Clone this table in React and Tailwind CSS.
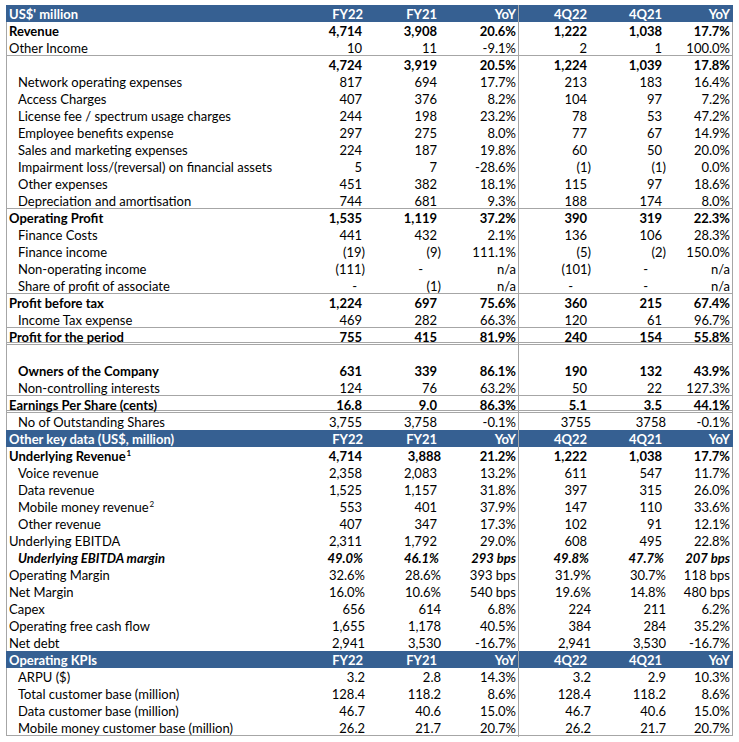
import React from 'react'

// Row border styles
const LINE = 'border-b border-b-[#a6a6a6]'
const DOUBLE = 'border-b-[3px] border-double border-b-[#a6a6a6]'

const GRID = 'grid grid-cols-[283px_77px_76px_76px_74px_75px_64px] h-[17px]'

const PAD = {
  2: 'pr-[2px]',
  4: 'pr-[4px]',
  5: 'pr-[5px]',
  6: 'pr-[6px]',
  10: 'pr-[10px]',
  20: 'pr-[20px]',
}

// v ending with "!" = no trailing accounting space, "~" = margin style
function padFor(col, v) {
  if (v.endsWith('!')) return 2
  if (v.endsWith('~')) return 4
  if (v.endsWith('%') || v.endsWith('bps') || v === 'n/a') return 2
  if (v.startsWith('(')) return 2
  if (v === '-') return col === 0 ? 10 : 20
  return col === 0 ? 5 : 6
}

const rows = [
  { head: "US$' million" },
  { label: 'Revenue', bold: true, v: ['4,714', '3,908', '20.6%', '1,222', '1,038', '17.7%'] },
  { label: 'Other Income', v: ['10', '11', '-9.1%', '2', '1', '100.0%'], line: LINE },
  { label: '', bold: true, v: ['4,724', '3,919', '20.5%', '1,224', '1,039', '17.8%'] },
  { label: 'Network operating expenses', indent: true, v: ['817', '694', '17.7%', '213', '183', '16.4%'] },
  { label: 'Access Charges', indent: true, v: ['407', '376', '8.2%', '104', '97', '7.2%'] },
  { label: 'License fee / spectrum usage charges', indent: true, v: ['244', '198', '23.2%', '78', '53', '47.2%'] },
  { label: 'Employee benefits expense', indent: true, v: ['297', '275', '8.0%', '77', '67', '14.9%'] },
  { label: 'Sales and marketing expenses', indent: true, v: ['224', '187', '19.8%', '60', '50', '20.0%'] },
  { label: 'Impairment loss/(reversal) on financial assets', indent: true, v: ['5', '7', '-28.6%', '(1)', '(1)', '0.0%'] },
  { label: 'Other expenses', indent: true, v: ['451', '382', '18.1%', '115', '97', '18.6%'] },
  { label: 'Depreciation and amortisation', indent: true, v: ['744', '681', '9.3%', '188', '174', '8.0%'], line: LINE },
  { label: 'Operating Profit', bold: true, v: ['1,535', '1,119', '37.2%', '390', '319', '22.3%'] },
  { label: 'Finance Costs', indent: true, v: ['441', '432', '2.1%', '136', '106', '28.3%'] },
  { label: 'Finance income', indent: true, v: ['(19)', '(9)', '111.1%', '(5)', '(2)', '150.0%'] },
  { label: 'Non-operating income', indent: true, v: ['(111)', '-', 'n/a', '(101)', '-', 'n/a'] },
  { label: 'Share of profit of associate', indent: true, v: ['-', '(1)', 'n/a', '-', '-', 'n/a'], line: LINE },
  { label: 'Profit before tax', bold: true, v: ['1,224', '697', '75.6%', '360', '215', '67.4%'] },
  { label: 'Income Tax expense', indent: true, v: ['469', '282', '66.3%', '120', '61', '96.7%'], line: LINE },
  { label: 'Profit for the period', bold: true, v: ['755', '415', '81.9%', '240', '154', '55.8%'], line: DOUBLE },
  { label: '', v: ['', '', '', '', '', ''] },
  { label: 'Owners of the Company', bold: true, indent: true, v: ['631', '339', '86.1%', '190', '132', '43.9%'] },
  { label: 'Non-controlling interests', indent: true, v: ['124', '76', '63.2%', '50', '22', '127.3%'], line: LINE },
  { label: 'Earnings Per Share (cents)', bold: true, v: ['16.8', '9.0', '86.3%', '5.1', '3.5', '44.1%'], line: DOUBLE },
  { label: 'No of Outstanding Shares', indent: true, v: ['3,755', '3,758', '-0.1%', '3755!', '3758!', '-0.1%'] },
  { head: 'Other key data (US$, million)' },
  { label: 'Underlying Revenue', sup: '1', bold: true, v: ['4,714', '3,888!', '21.2%', '1,222', '1,038', '17.7%'] },
  { label: 'Voice revenue', indent: true, v: ['2,358', '2,083', '13.2%', '611', '547', '11.7%'] },
  { label: 'Data revenue', indent: true, v: ['1,525', '1,157', '31.8%', '397', '315', '26.0%'] },
  { label: 'Mobile money revenue', sup: '2', indent: true, v: ['553', '401', '37.9%', '147', '110', '33.6%'] },
  { label: 'Other revenue', indent: true, v: ['407', '347', '17.3%', '102', '91', '12.1%'] },
  { label: 'Underlying EBITDA', v: ['2,311', '1,792', '29.0%', '608', '495', '22.8%'] },
  { label: 'Underlying EBITDA margin', bold: true, italic: true, indent: true, v: ['49.0%~', '46.1%~', '293 bps', '49.8%~', '47.7%~', '207 bps'] },
  { label: 'Operating Margin', v: ['32.6%', '28.6%', '393 bps', '31.9%', '30.7%', '118 bps'] },
  { label: 'Net Margin', v: ['16.0%', '10.6%', '540 bps', '19.6%', '14.8%', '480 bps'] },
  { label: 'Capex', v: ['656!', '614!', '6.8%', '224!', '211!', '6.2%'] },
  { label: 'Operating free cash flow', v: ['1,655!', '1,178!', '40.5%', '384!', '284!', '35.2%'] },
  { label: 'Net debt', v: ['2,941!', '3,530!', '-16.7%', '2,941!', '3,530!', '-16.7%'] },
  { head: 'Operating KPIs' },
  { label: 'ARPU ($)', indent: true, v: ['3.2!', '2.8!', '14.3%', '3.2!', '2.9!', '10.3%'] },
  { label: 'Total customer base (million)', indent: true, v: ['128.4!', '118.2!', '8.6%', '128.4!', '118.2!', '8.6%'] },
  { label: 'Data customer base (million)', indent: true, v: ['46.7!', '40.6!', '15.0%', '46.7!', '40.6!', '15.0%'] },
  { label: 'Mobile money customer base (million)', indent: true, v: ['26.2!', '21.7!', '20.7%', '26.2!', '21.7!', '20.7%'], line: LINE },
]

const HEADS = ['FY22', 'FY21', 'YoY', '4Q22', '4Q21', 'YoY']

function HeadRow({ title }) {
  return (
    <div className={`${GRID} bg-[#366092] text-white font-bold border-x border-[#366092] leading-[18px]`}>
      <div className="pl-[2px]">{title}</div>
      {HEADS.map((h, i) => (
        <div
          key={i}
          className={`text-right ${i === 2 ? 'pr-[2px] border-r border-r-[#a6a6a6]' : i === 0 ? 'pr-[4px]' : i === 5 ? 'pr-[2px]' : 'pr-[6px]'}`}
        >
          {h}
        </div>
      ))}
    </div>
  )
}

function DataRow({ row }) {
  const weight = row.bold ? 'font-bold' : ''
  const style = row.italic ? 'italic' : ''
  return (
    <div className={`${GRID} border-x border-x-[#a6a6a6] ${row.line || ''} ${weight} ${style} leading-[18px]`}>
      <div className={`${row.indent ? 'pl-[11px]' : 'pl-[2px]'} whitespace-nowrap`}>
        {row.label}
        {row.sup && <sup className="text-[8px] -top-[5px] ml-px">{row.sup}</sup>}
      </div>
      {row.v.map((raw, i) => {
        const val = raw.replace(/[!~]$/, '')
        return (
          <div
            key={i}
            className={`text-right whitespace-nowrap ${PAD[padFor(i, raw)]} ${i === 2 ? 'border-r border-r-[#a6a6a6]' : ''}`}
          >
            {val}
          </div>
        )
      })}
    </div>
  )
}

export default function App() {
  return (
    <div className="min-h-[742px] w-[739px] bg-white pt-[5px] text-black text-[13px] font-['Lato',sans-serif]">
      <div className="ml-[6px] w-[727px]">
        {rows.map((row, i) =>
          row.head ? <HeadRow key={i} title={row.head} /> : <DataRow key={i} row={row} />
        )}
      </div>
    </div>
  )
}
